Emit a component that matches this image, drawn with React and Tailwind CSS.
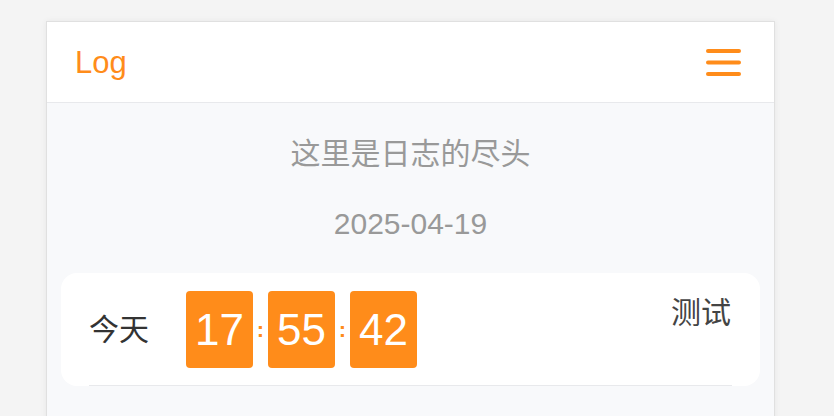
import React from 'react';

const font = { fontFamily: '"Liberation Sans", Arial, "Noto Sans CJK SC", sans-serif' };

const TimeBox = ({ value }) => (
    <div className="w-[67px] h-[77px] bg-[#ff8c1a] rounded-[4px] flex items-center justify-center text-white text-[44px] leading-none">
        {value}
    </div>
);

const Colon = () => (
    <span className="w-[15px] text-center text-[#ff8c1a] text-[22px] leading-none font-bold">:</span>
);

const App = () => {
    return (
        <div className="min-h-screen bg-[#f4f4f4] pt-[21px]" style={font}>
            <div className="ml-[46px] w-[729px] min-h-[420px] border border-[#e0e0e0] bg-[#f8f9fb] shadow-[0_0_6px_rgba(0,0,0,0.06)]">
                {/* header */}
                <div className="h-[81px] bg-white border-b border-[#e8e9ec] flex items-center justify-between pl-[28px] pr-[33px]">
                    <span className="text-[#ff8c1a] text-[31px] leading-none">Log</span>
                    <svg width="35" height="27" viewBox="0 0 35 27">
                        <g stroke="#ff8c1a" strokeWidth="4" strokeLinecap="round">
                            <line x1="2" y1="2" x2="33" y2="2" />
                            <line x1="2" y1="13.5" x2="33" y2="13.5" />
                            <line x1="2" y1="25" x2="33" y2="25" />
                        </g>
                    </svg>
                </div>

                {/* body */}
                <div className="pt-[28px] px-[14px]">
                    <p className="text-center text-[#999] text-[30px] leading-[45px]">这里是日志的尽头</p>
                    <p className="text-center text-[#999] text-[30px] leading-[45px] mt-[25px]">2025-04-19</p>

                    <div className="mt-[27px] bg-white rounded-2xl px-[28px]">
                        <div className="flex justify-between border-b border-[#e8e9ec] pt-[18px] pb-[17px]">
                            <div className="flex items-center">
                                <span className="text-[#333] text-[30px] leading-none mr-[37px]">今天</span>
                                <TimeBox value="17" />
                                <Colon />
                                <TimeBox value="55" />
                                <Colon />
                                <TimeBox value="42" />
                            </div>
                            <span className="text-[#444] text-[30px] leading-[44px] pr-[1px]">测试</span>
                        </div>
                    </div>
                </div>
            </div>
        </div>
    );
};

export default App;
